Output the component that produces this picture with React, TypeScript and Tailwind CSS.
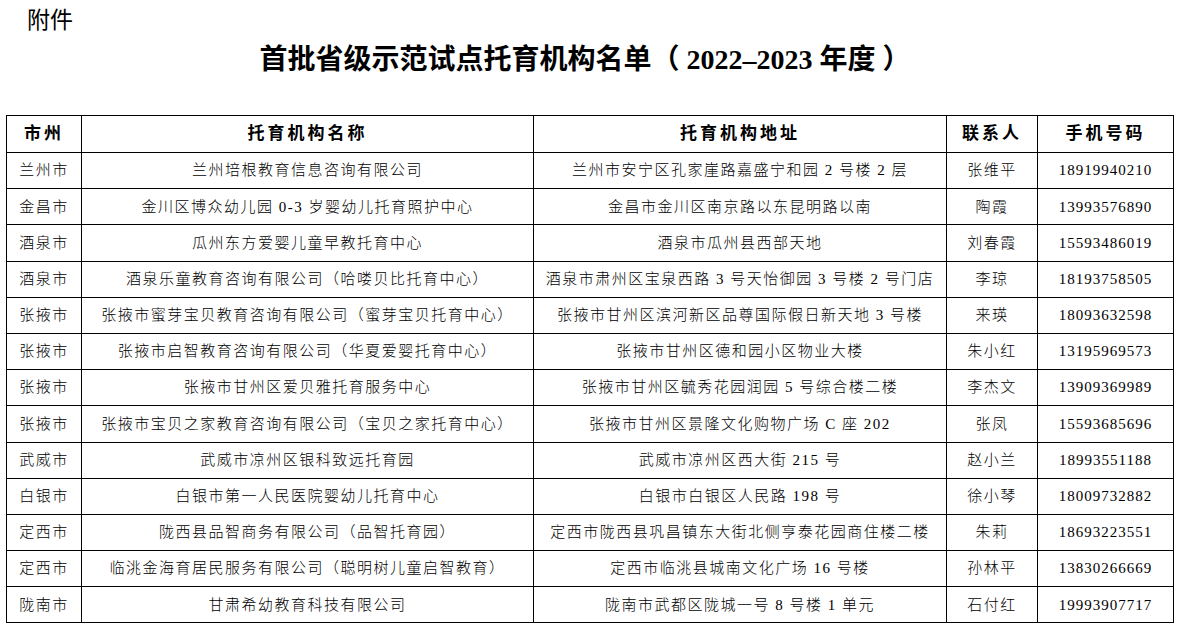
const ROWS = [
  ['兰州市', '兰州培根教育信息咨询有限公司', '兰州市安宁区孔家崖路嘉盛宁和园 2 号楼 2 层', '张维平', '18919940210'],
  ['金昌市', '金川区博众幼儿园 0-3 岁婴幼儿托育照护中心', '金昌市金川区南京路以东昆明路以南', '陶霞', '13993576890'],
  ['酒泉市', '瓜州东方爱婴儿童早教托育中心', '酒泉市瓜州县西部天地', '刘春霞', '15593486019'],
  ['酒泉市', '酒泉乐童教育咨询有限公司（哈喽贝比托育中心）', '酒泉市肃州区宝泉西路 3 号天怡御园 3 号楼 2 号门店', '李琼', '18193758505'],
  ['张掖市', '张掖市蜜芽宝贝教育咨询有限公司（蜜芽宝贝托育中心）', '张掖市甘州区滨河新区品尊国际假日新天地 3 号楼', '来瑛', '18093632598'],
  ['张掖市', '张掖市启智教育咨询有限公司（华夏爱婴托育中心）', '张掖市甘州区德和园小区物业大楼', '朱小红', '13195969573'],
  ['张掖市', '张掖市甘州区爱贝雅托育服务中心', '张掖市甘州区毓秀花园润园 5 号综合楼二楼', '李杰文', '13909369989'],
  ['张掖市', '张掖市宝贝之家教育咨询有限公司（宝贝之家托育中心）', '张掖市甘州区景隆文化购物广场 C 座 202', '张凤', '15593685696'],
  ['武威市', '武威市凉州区银科致远托育园', '武威市凉州区西大街 215 号', '赵小兰', '18993551188'],
  ['白银市', '白银市第一人民医院婴幼儿托育中心', '白银市白银区人民路 198 号', '徐小琴', '18009732882'],
  ['定西市', '陇西县品智商务有限公司（品智托育园）', '定西市陇西县巩昌镇东大街北侧亨泰花园商住楼二楼', '朱莉', '18693223551'],
  ['定西市', '临洮金海育居民服务有限公司（聪明树儿童启智教育）', '定西市临洮县城南文化广场 16 号楼', '孙林平', '13830266669'],
  ['陇南市', '甘肃希幼教育科技有限公司', '陇南市武都区陇城一号 8 号楼 1 单元', '石付红', '19993907717'],
]

const HEADERS = ['市州', '托育机构名称', '托育机构地址', '联系人', '手机号码']

export default function App() {
  return (
    <div className="w-[1184px] h-[642px] bg-white text-black overflow-hidden font-['Liberation_Serif','Noto_Sans_CJK_SC',serif]">
      <div className="pl-[27px] pt-[4px] text-[23px] leading-[28px] font-['Noto_Sans_CJK_SC',sans-serif]">附件</div>
      <h1 className="mt-[10px] text-center text-[28px] leading-[36px] font-bold pr-[14px]">
        首批省级示范试点托育机构名单（ 2022–2023 年度 ）
      </h1>

      <table className="mt-[37px] ml-[6px] w-[1167px] table-fixed border-collapse">
        <colgroup>
          <col className="w-[75px]" />
          <col className="w-[452px]" />
          <col className="w-[413px]" />
          <col className="w-[91px]" />
          <col className="w-[136px]" />
        </colgroup>
        <thead>
          <tr className="h-[37px]">
            {HEADERS.map(h => (
              <th key={h} className="border border-black p-0 text-center text-[17px] font-bold tracking-[3px] whitespace-nowrap">
                {h}
              </th>
            ))}
          </tr>
        </thead>
        <tbody>
          {ROWS.map((row, i) => (
            <tr key={i} className="h-[36.2px]">
              {row.map((cell, j) => (
                <td key={j}
                  className={`border border-black p-0 text-center text-[15px] font-light whitespace-nowrap ${
                    j === 4 ? 'tracking-[1px]' : 'tracking-[1.5px]'
                  }`}>
                  {cell}
                </td>
              ))}
            </tr>
          ))}
        </tbody>
      </table>
    </div>
  )
}
